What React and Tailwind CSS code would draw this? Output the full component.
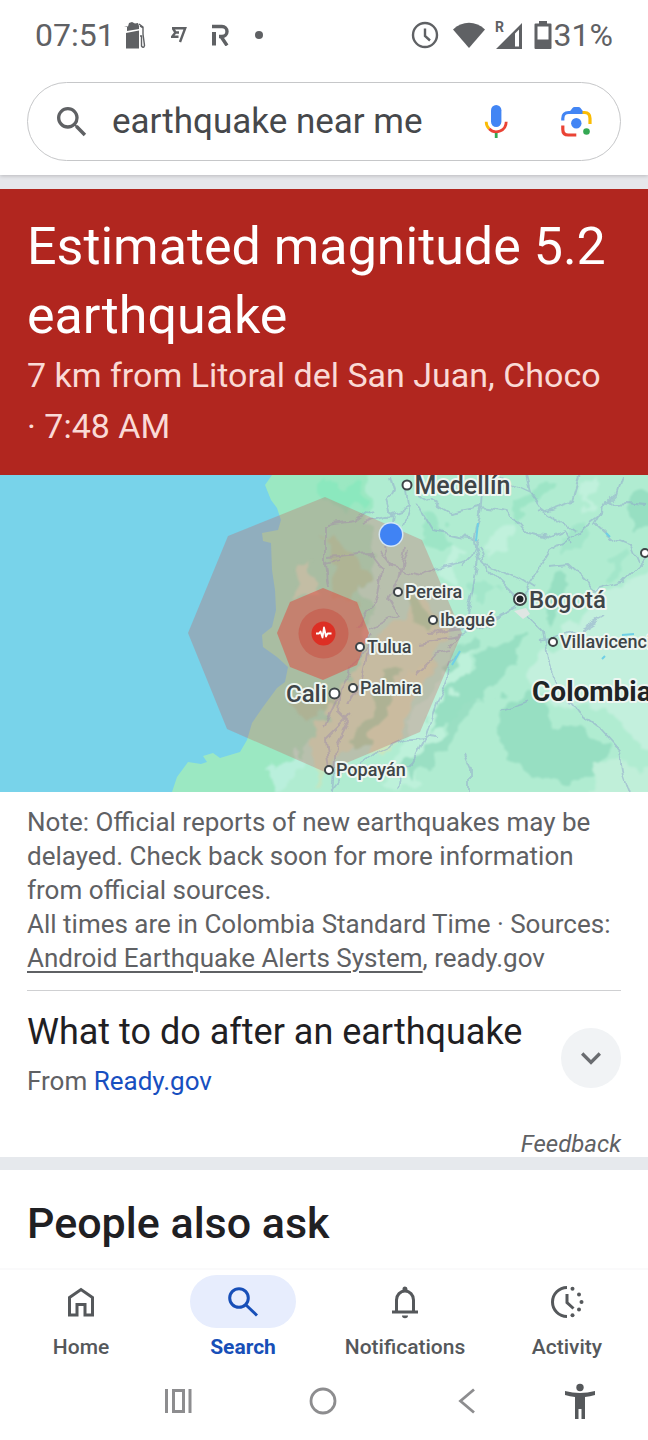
import { useState } from 'react';
import { MdKeyboardArrowDown, MdSearch } from 'react-icons/md';

/** System status bar: clock and notification glyphs left, radios and battery right. */
function StatusBar() {
  return (
    <div className="flex h-[69px] items-center justify-between px-[35px] text-[#5f6164]">
      <div className="flex items-center">
        <span className="text-[32px] leading-none">07:51</span>
        <svg className="ml-2 h-7 w-6" viewBox="0 0 24 28" fill="currentColor" aria-hidden="true">
          <path d="M1 5l4 .5L6 2l3-1 3 1.500 3-.5 1 3v3l-12 2v-4z" />
          <path d="M3 12l13-2.500v18H3z" />
          <path d="M16 3l4 3v7m-3 2h1.500v10q2 3 3-.5L20 13V7l-3-2" fill="none" stroke="currentColor" strokeWidth="1.400" />
        </svg>
        <svg className="ml-6 h-4 w-4" viewBox="0 0 16 16" fill="none" stroke="currentColor" strokeWidth="2.400" aria-hidden="true">
          <path d="M1 1.200h13.200L9 15M2 1.500l2.500 4L1 9.800h6.500M5 5.500h3" />
        </svg>
        <svg className="ml-6 h-[22px] w-5" viewBox="0 0 20 22" fill="none" stroke="currentColor" aria-hidden="true">
          <path d="M3 8v13.500" strokeWidth="4" />
          <path d="M1 2.500h10a4.500 4.500 0 0 1 0 10H8M10 12.500l6 9" strokeWidth="3.400" />
        </svg>
        <span className="ml-6 size-2 rounded-full bg-[#5f6164]" />
      </div>
      <div className="flex items-center">
        <svg className="size-7" viewBox="0 0 28 28" fill="none" stroke="currentColor" strokeWidth="2.400" aria-hidden="true">
          <circle cx="14" cy="14" r="12" />
          <path d="M14 7.500v7.500l5 4.500" />
        </svg>
        <svg className="ml-3 h-7 w-9" viewBox="0 0 36 28" fill="currentColor" aria-hidden="true">
          <path d="M2 8.500C11-.5 25-.5 34 8.500L18 27z" />
        </svg>
        <svg className="ml-2 h-[30px] w-[30px] overflow-visible" viewBox="0 0 30 30" aria-hidden="true">
          <path d="M1 29L27 3v26zM20 13.500V26.500h4V9.500z" fill="currentColor" fillRule="evenodd" />
          <text x="0" y="12" fontSize="14" fontWeight="700" fill="currentColor">R</text>
        </svg>
        <svg className="ml-2 h-7 w-[21px]" viewBox="0 0 21 28" fill="currentColor" aria-hidden="true">
          <path d="M6 0h8v2.500h3.500q1 0 1 1V27q0 1-1 1h-15q-1 0-1-1V3.500q0-1 1-1H6zM4.500 5.500V18.500h11V5.500z" fillRule="evenodd" />
        </svg>
        <span className="text-[32px] leading-none">31%</span>
      </div>
    </div>
  );
}

function MicIcon() {
  return (
    <svg className="size-10" viewBox="0 0 40 40" fill="none" strokeWidth="2.800" aria-hidden="true">
      <rect x="15" y="3" width="10.400" height="22" rx="5.200" fill="#4285f4" />
      <path d="M10.200 19.700a10 10 0 0 0 2.900 7.100" stroke="#fbbc04" />
      <path d="M13.100 26.800A10 10 0 0 0 30.200 19.700" stroke="#ea4335" />
      <path d="M20.200 31v5" stroke="#34a853" />
    </svg>
  );
}

function LensIcon() {
  return (
    <svg className="size-10" viewBox="0 0 40 40" fill="none" strokeWidth="3.200" aria-hidden="true">
      <path d="M13 10.500l3.500-4.500q.8-1 2-1h4q1.200 0 2 1l3.500 4.500z" fill="#4285f4" />
      <path d="M6.800 18.500V16.500q0-6 6-6H27" stroke="#4285f4" />
      <path d="M26.500 10.500h2q5.500 0 5.500 6v5.500" stroke="#fbbc04" />
      <path d="M6.800 23.500v4q0 5.500 5.500 5.500h8" stroke="#ea4335" />
      <circle cx="20.300" cy="21.300" r="5.200" fill="#4285f4" />
      <circle cx="30.500" cy="29.500" r="3.300" fill="#34a853" />
    </svg>
  );
}

function SearchBar() {
  const [query, setQuery] = useState('earthquake near me');
  return (
    <div className="px-[27px] pb-[14px] pt-[13px]">
      <form
        className="flex h-[79px] items-center rounded-full border border-[#c6c7c9] px-6"
        onSubmit={(e) => e.preventDefault()}
      >
        <button type="submit" aria-label="Search" className="text-[#5f6164]">
          <MdSearch className="size-10" aria-hidden="true" />
        </button>
        <input
          type="text"
          aria-label="Search query"
          value={query}
          onChange={(e) => setQuery(e.target.value)}
          className="ml-5 min-w-0 flex-1 bg-transparent text-[35px] leading-[44px] text-[#46484b] outline-none"
        />
        <button type="button" aria-label="Search by voice">
          <MicIcon />
        </button>
        <button type="button" aria-label="Search by image" className="ml-10">
          <LensIcon />
        </button>
      </form>
    </div>
  );
}

const CITIES = [
  { name: 'Medellín', x: 407, y: 10, size: 25, r: 4.5 },
  { name: 'Pereira', x: 398, y: 117, size: 18, r: 4 },
  { name: 'Ibagué', x: 433, y: 145, size: 18, r: 4 },
  { name: 'Tulua', x: 360, y: 172, size: 18, r: 4 },
  { name: 'Palmira', x: 353, y: 213, size: 18, r: 4 },
  { name: 'Popayán', x: 329, y: 295, size: 18, r: 4 },
  { name: 'Villavicencio', x: 553, y: 167, size: 18, r: 4 },
];

const ROADS = [
  'M390 0l4 14-6 12 4 14-20 4-8 4',
  'M407 16l2 16-16 6-1 10M409 32l-6 18M404 72l-6 34-12 18 10 16-26 14',
  'M340 84l-14 4 2 20M326 50l30-4 16-12M328 82l40-4 14 18-4 24-20 34',
  'M384 70l6 22 30 8 24-8 24-6M400 100l8-26M392 92l-12-16',
  'M420 20l30 18 30-6 28 4 16 20 26 6 14-6 10 14M484 0l-2 30-8 36 4 20-8 40-6 24-30 10',
  'M416 26l18 30 26 6 18 2-6 16-12 12M478 84l40 20 16 10M478 72l10 24',
  'M526 0l4 16 14 20 30 20M530 16l-30-14M580 0l-8 26-34 12',
  'M648 30l-22-2-22 2-4 12-30 22-20 12-10 16-20 30-12 16-26 10-18 6-34 4',
  'M604 36l-8 14 16 14 20 8 6 14M622 0l-6 20-14 14M550 92l20-2 26 24 26-8 26-26',
  'M490 96l16 16 16 16M516 132l-16 10-20 12-22 6M528 140l16 16 4 28 8 24 22 30 24 18 18 20 4 24 6 17',
  'M500 236l30-10M540 166l40-10 24-14M420 167l40-6-10 12M416 200l20-20 14-4',
  'M374 160l-16 24-18 30-2 24 10 10-12 24-4 45M370 164l-8 40-14 24M338 222l-14 30M350 240l-24 24 4 30',
  'M455 180l-16 40-14 42-12 24-14 14-2 14M424 262l-20 2-30 14-30 20-14 18M440 262l-16-2',
  'M470 317v-24l-6-14M325 50v40M325 90l3 22',
];

function EpicenterMap() {
  return (
    <svg
      className="block h-[317px] w-full bg-[#78d3ea]"
      viewBox="0 0 648 317"
      preserveAspectRatio="xMidYMid slice"
      role="img"
      aria-label="Map of western Colombia with the earthquake area"
    >
      <defs>
        {/* ragged edges for the terrain patches */}
        <filter id="terrain" x="-5%" y="-5%" width="110%" height="110%">
          <feTurbulence type="fractalNoise" baseFrequency="0.04" numOctaves="3" seed="4" result="noise" />
          <feDisplacementMap in="SourceGraphic" in2="noise" scale="34" xChannelSelector="R" yChannelSelector="G" />
          <feGaussianBlur stdDeviation="0.8" />
        </filter>
        {/* makes the straight road segments wander */}
        <filter id="winding" x="-5%" y="-5%" width="110%" height="110%">
          <feTurbulence type="fractalNoise" baseFrequency="0.06" numOctaves="2" seed="9" result="noise" />
          <feDisplacementMap in="SourceGraphic" in2="noise" scale="12" xChannelSelector="R" yChannelSelector="G" />
        </filter>
        <clipPath id="land">
          <path d="M272 0L265 10l6 15 6 8 4 12-3 10-16 3 1 8 8 2 1 27 3 20 1 20-4 17-10 8 1 12 14 10 11 10-3 15-8 6-14 19-11 16-5 17-7 12-20 6-7-5-10 3 4 6-6 2-13-2-11 15L172 317H648V0z" />
        </clipPath>
      </defs>

      <rect width="648" height="317" fill="#78d3ea" />
      <g clipPath="url(#land)">
        <rect width="648" height="317" fill="#9be8c2" />
        <g filter="url(#terrain)">
          <path d="M372-30h320v380H270l20-60 40-40 30-60 10-80z" fill="#b0ecd1" />
          <path d="M590 120l90-40v220l-72-60-20-16-40 4-20-30 30-26z" fill="#c3f0dd" />
          <path d="M440 200l26-30 10 6-26 60-40 80h-30l30-60z" fill="#bdf1da" />
          <path d="M420 120l30 20-20 60-60 60-60 50 10-60 30-50z" fill="#c4e6c0" />
          <path d="M322 2l40 10 4 20-24 2-20-10z" fill="#8be8be" />
          <path d="M505 158l20-4-10 40-30 20-30 36-30 6 30-46z" fill="#97dfc2" />
          <path d="M494 228l44-10 14 30 30 6 30 14-8 20-36 22-46-12-20-20z" fill="#97dfc2" />
          <path d="M630 20l30-2v40l-30-12zM540 118l20-16 14 10-20 40-12-6z" fill="#97dfc2" />
          <path d="M510 30l34-26 6 6-36 40zM420 40l30 10 4 20-24 0z" fill="#9de5c6" />
          <path d="M560 60l30-20 10 10-34 30zM600 90l30-16 6 8-30 24zM470 110l20-10 10 14-20 16z" fill="#a3e6ca" />
          <path d="M440 100l14-30 8 10-10 34zM492 60l20-10-6 24-16 10zM580 10l16-10 4 20-16 14z" fill="#c0f1dc" />
          <path d="M402 290l40-30 30-40 6 8-34 48-36 30zM440 190l36-30 6 8-36 32z" fill="#9adfc3" />
          <path d="M590 290l38-4 40 12v40h-70z" fill="#c0efd9" />
          <path d="M290 120l6-24 12-8 4 24 8 12z" fill="#c0e8c4" />
          <path d="M330 66l36 26 4 20-20 16-16-10zM404 130l40 6-16 20-16-10z" fill="#a4dcae" />
          <path d="M310 210l24 24-20 14-24-20zM384 200l16-8-6 40-20 40-24-6 20-36z" fill="#a2d9ae" />
          <path d="M380 250l30-60 20 0-20 60-40 30z" fill="#cbe6be" />
          <path d="M270 300l10-18 16-10 6 10-10 20-14 15z" fill="#b9efdc" />
        </g>
        <g filter="url(#winding)" fill="none" stroke="#8fa3cb" strokeWidth="1.800" strokeLinejoin="round" opacity="0.5">
          {ROADS.map((d) => (
            <path key={d} d={d} />
          ))}
        </g>
        <path d="M478 48l-2 18M622 160l12-1M606 58l4 4M452 190l8-14M602 184l3-3" fill="none" stroke="#6fcfe6" strokeWidth="2" />
        <path d="M514 136l12-3 4 6-7 5z" fill="#dfe6e3" />
      </g>

      {/* shaking intensity rings */}
      <path d="M188 158L228 61l97-39 97 43 40 93-42 99-95 40-98-43z" fill="#cb5b5a" opacity="0.3" />
      <path d="M277 158l13-31 33-14 34 14 12 31-12 32-34 15-33-13z" fill="#e2453c" opacity="0.5" />
      <circle cx="323.500" cy="158.500" r="25" fill="#c8473a" opacity="0.45" />
      <circle cx="323.500" cy="158.500" r="12" fill="#dd2f24" />
      <path d="M316 158.500h3l1.500-2 2 6 1.500-10 2 9 1.500-3h4" fill="none" stroke="#fff" strokeWidth="1.800" strokeLinejoin="round" />

      <circle cx="391" cy="59.500" r="12.500" fill="#d4e6f5" />
      <circle cx="391" cy="59.500" r="11" fill="#4083f4" />

      <g fill="#3e4548" stroke="#eef6f1" strokeWidth="4" strokeLinejoin="round" paintOrder="stroke" fontWeight="500">
        {CITIES.map(({ name, x, y, size, r }) => (
          <text key={name} x={x + r + 3} y={y + Math.round(size * 0.3) + 1} fontSize={size}>
            {name}
          </text>
        ))}
        <text x="286" y="227" fontSize="24">Cali</text>
        <text x="529" y="133" fontSize="24">Bogotá</text>
        <text x="532" y="226" fontSize="28" fontWeight="700" fill="#1f2426">Colombia</text>
      </g>
      <g fill="#fff" stroke="#3e4548" strokeWidth="2">
        {CITIES.map(({ name, x, y, r }) => (
          <circle key={name} cx={x} cy={y} r={r} />
        ))}
        <circle cx="334.500" cy="218.500" r="5" />
        <circle cx="645" cy="78" r="4" />
        <circle cx="520" cy="124" r="6" />
      </g>
      <circle cx="520" cy="124" r="3.500" fill="#1f2426" />
    </svg>
  );
}

function HomeIcon() {
  return (
    <svg className="size-9" viewBox="0 0 36 36" fill="none" stroke="currentColor" strokeWidth="3" aria-hidden="true">
      <path d="M6.500 13.500L18 5.500l11.500 8v17.500h-7.500V20.500h-8V31H6.500z" />
    </svg>
  );
}

function SearchIcon() {
  return (
    <svg className="size-9" viewBox="0 0 36 36" fill="none" stroke="currentColor" strokeWidth="3" aria-hidden="true">
      <circle cx="14" cy="14" r="9.300" />
      <path d="M20.500 20.500L32 31.500" />
    </svg>
  );
}

function BellIcon() {
  return (
    <svg className="size-9" viewBox="0 0 36 36" fill="none" stroke="currentColor" strokeWidth="3" aria-hidden="true">
      <path d="M9.500 28V16a8.500 9 0 0 1 17 0v12M5 28h26" />
      <path d="M15.500 7V5a2.500 2.500 0 0 1 5 0v2zM15 31.500h6a3 2.700 0 0 1-6 0z" fill="currentColor" stroke="none" />
    </svg>
  );
}

function ActivityIcon() {
  return (
    <svg className="size-9" viewBox="0 0 36 36" fill="none" stroke="currentColor" strokeWidth="3" aria-hidden="true">
      <path d="M18 3.500a14.500 14.500 0 0 0 0 29" />
      <path d="M18 10v8.500l6.500 6" />
      <g fill="currentColor" stroke="none">
        <circle cx="23.500" cy="4.800" r="2" />
        <circle cx="30" cy="10.500" r="2" />
        <circle cx="32.500" cy="18" r="2" />
        <circle cx="30" cy="25.500" r="2" />
        <circle cx="23.500" cy="31.200" r="2" />
      </g>
    </svg>
  );
}

const TABS = [
  { label: 'Home', Icon: HomeIcon },
  { label: 'Search', Icon: SearchIcon, active: true },
  { label: 'Notifications', Icon: BellIcon },
  { label: 'Activity', Icon: ActivityIcon },
];

function BottomTabs() {
  return (
    <nav aria-label="Main" className="grid grid-cols-4 border-t-2 border-[#fafafb] pt-[5px] text-[#55585b]">
      {TABS.map(({ label, Icon, active }) => (
        <a
          key={label}
          href="#"
          aria-current={active ? 'page' : undefined}
          className={`flex flex-col items-center ${active ? 'text-[#174fb8]' : ''}`}
        >
          <span className={`flex h-[53px] w-[106px] items-center justify-center rounded-full ${active ? 'bg-[#e7edfd]' : ''}`}>
            <Icon />
          </span>
          <span className={`mt-1 text-[21px] leading-[30px] ${active ? 'font-bold' : 'font-medium'}`}>{label}</span>
        </a>
      ))}
    </nav>
  );
}

function SystemNav() {
  return (
    <div className="grid h-[78px] grid-cols-[144fr_144fr_144fr_84fr] items-center justify-items-center pl-[106px] pr-[26px] text-[#8d8d8f]">
      <button type="button" aria-label="Recent apps">
        <svg className="size-8" viewBox="0 0 32 32" fill="none" stroke="currentColor" strokeWidth="3" aria-hidden="true">
          <path d="M4.500 4v24M28 4v24M11.500 5.500h10v21h-10z" />
        </svg>
      </button>
      <button type="button" aria-label="Home screen">
        <svg className="size-8" viewBox="0 0 32 32" fill="none" stroke="currentColor" strokeWidth="2.800" aria-hidden="true">
          <circle cx="17" cy="16" r="12" />
        </svg>
      </button>
      <button type="button" aria-label="Back">
        <svg className="size-8" viewBox="0 0 32 32" fill="none" stroke="currentColor" strokeWidth="2.800" aria-hidden="true">
          <path d="M24 4.500L10.500 16 24 27.500" />
        </svg>
      </button>
      <button type="button" aria-label="Accessibility" className="text-[#55585b]">
        <svg className="size-9" viewBox="0 0 36 36" fill="currentColor" aria-hidden="true">
          <circle cx="18" cy="4.500" r="3.700" />
          <path d="M3 8q15 4 30 0v4q-5 1.500-10 2v22h-3.500V26h-3v10H13V14q-5-.5-10-2z" />
        </svg>
      </button>
    </div>
  );
}

export default function App() {
  return (
    <div className="flex min-h-screen flex-col bg-white font-[Roboto,sans-serif]">
      <header className="relative z-10 shadow-[0_1px_4px_rgba(0,0,0,0.2)]">
        <StatusBar />
        <SearchBar />
      </header>

      <main className="flex-1">
        <section className="border-t-[14px] border-[#e6e7eb]">
          <div className="bg-[#b1261f] px-[27px] pb-[23px] pt-[23px]">
            <h1 className="text-[52px] leading-[69px] text-white">Estimated magnitude 5.2 earthquake</h1>
            <p className="text-[34px] leading-[51px] text-[#fadad6]">
              7 km from Litoral del San Juan, Choco <span className="whitespace-nowrap">· 7:48 AM</span>
            </p>
          </div>

          <EpicenterMap />

          <div className="px-[27px]">
            <div className="border-b border-[#cfd0d2] pb-[15px] pt-[13px] text-[26px] leading-[34px] text-[#5f6164]">
              <p>Note: Official reports of new earthquakes may be delayed. Check back soon for more information from official sources.</p>
              <p>
                All times are in Colombia Standard Time · Sources:{' '}
                <a href="#" className="underline decoration-2 underline-offset-4">Android Earthquake Alerts System</a>, ready.gov
              </p>
            </div>

            <div className="flex items-center justify-between pt-[18px]">
              <div>
                <h2 className="text-[36px] leading-[46px] text-[#1f2023]">What to do after an earthquake</h2>
                <p className="mt-[9px] text-[26px] leading-[34px] text-[#5f6164]">
                  From <a href="#" className="text-[#174fc0]">Ready.gov</a>
                </p>
              </div>
              <button
                type="button"
                aria-label="Show more"
                className="mt-2 flex size-[60px] items-center justify-center rounded-full bg-[#f1f3f5] text-[#6a6c70]"
              >
                <MdKeyboardArrowDown className="size-10" aria-hidden="true" />
              </button>
            </div>

            <div className="flex justify-end pt-[33px]">
              <a href="#" className="text-[24px] leading-[26px] text-[#5f6164] italic">Feedback</a>
            </div>
          </div>
        </section>

        <section className="border-t-[13px] border-[#e6e9ed] px-[27px] pb-[15px] pt-6">
          <h2 className="text-[43px] leading-[58px] font-medium text-[#1f2023]">People also ask</h2>
        </section>
      </main>

      <footer>
        <BottomTabs />
        <SystemNav />
      </footer>
    </div>
  );
}
